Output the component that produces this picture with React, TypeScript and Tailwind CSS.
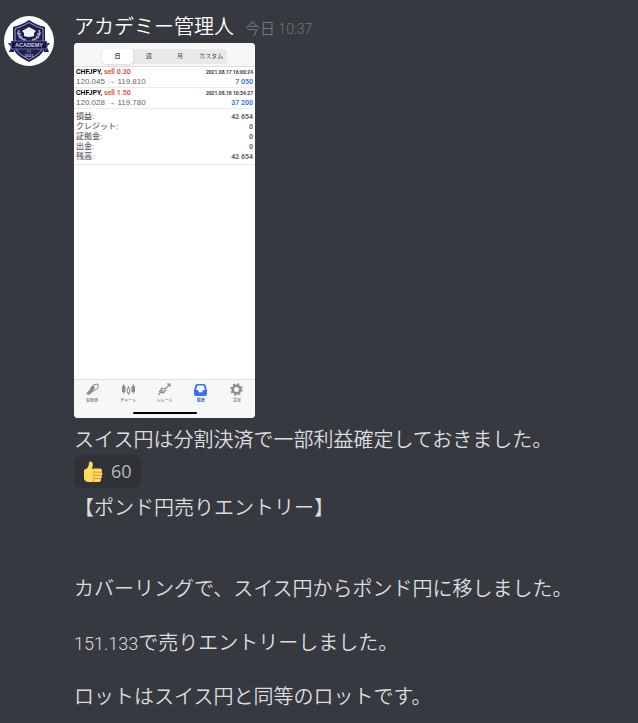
import { ReactNode } from "react";

const latin = "font-['Roboto','Noto_Sans_CJK_JP',sans-serif]";

function Avatar() {
  return (
    <svg viewBox="0 0 50 50" className="h-[50px] w-[50px] shrink-0" role="img" aria-label="ACADEMY FX 2021">
      <circle cx="25" cy="25" r="25" fill="#fff" />
      <path d="M25 4 Q32 9 41 11 V29 C41 38 32 42 25 46 C18 42 9 38 9 29 V11 Q18 9 25 4Z" fill="#1d1f52" />
      <path d="M25 6.500 Q32 11 39 12.600 V29 C39 36 31 40 25 43.500 C19 40 11 36 11 29 V12.600 Q18 11 25 6.500Z" fill="none" stroke="#b9bbd0" strokeWidth="0.800" />
      <path d="M15 14 C13 19 16 23 22 24 M35 14 C37 19 34 23 28 24 M13 17l4 1M15 22l3-2M37 17l-4 1M35 22l-3-2" fill="none" stroke="#a3a6c0" strokeWidth="1.500" />
      <path d="M18 15 L25 11 L32 15 L30 17 V20 Q25 22 20 20 V17Z" fill="#f1f1f6" />
      <path d="M4 27 H10 V36 H5 L7 31Z M46 27 H40 V36 H45 L43 31Z" fill="#1d1f52" />
      <path d="M7 25 H43 V33 H7Z" fill="#14164a" stroke="#9fa2bd" strokeWidth="0.600" />
      <text x="25" y="31" textAnchor="middle" fontSize="5.500" fontWeight="700" fill="#d5d6e2" fontFamily="Liberation Sans, sans-serif">ACADEMY</text>
      <text x="25" y="37" textAnchor="middle" fontSize="3" fill="#b7b9cf" fontFamily="Liberation Sans, sans-serif">FX</text>
      <text x="25" y="41" textAnchor="middle" fontSize="4" fontWeight="700" fill="#b7b9cf" fontFamily="Liberation Sans, sans-serif">2021</text>
    </svg>
  );
}

function Thumb() {
  return (
    <svg viewBox="0 0 20 22" className="h-[22px] w-5" aria-hidden="true">
      <path d="M1 9.500 Q1 8 3 8 C5 7 6 4 6 2 C6 0 9 0 9.500 2 C10 4 9.500 6 9 8 H12 V21 H5 Q1 20 1 17Z" fill="#ffdb5e" />
      <rect x="9" y="7.500" width="10" height="4" rx="2" fill="#ffdb5e" />
      <rect x="10" y="11" width="9.500" height="3.600" rx="1.800" fill="#ffdb5e" />
      <rect x="10" y="14" width="9" height="3.600" rx="1.800" fill="#ffdb5e" />
      <rect x="9" y="17" width="9" height="4" rx="2" fill="#ffdb5e" />
      <path d="M18 11.200H12Q10.500 11 10.500 9.500M19 14.400H12M18 17.500H12M11 11v8q0 2-2 2" fill="none" stroke="#ee9547" strokeWidth="1" />
    </svg>
  );
}

const icons: ReactNode[] = [
  <g key="q"><path d="M0 11 L5 5 L8 8 L3 12Z" fill="currentColor" /><path d="M4 5 L7 2 L9 5 L7 8Z" fill="currentColor" /><path d="M7 2 L12 1 V5 L8 8" fill="none" stroke="currentColor" strokeWidth="1" /></g>,
  <g key="c" fill="currentColor"><path d="M0 3h3.500v6H0zM1.200 1h1v10h-1zM9.500 3H13v6H9.500zM10.800 1h1v10h-1z" /><path d="M5.300 5h2.400v5H5.300zM6.500 3v2M6.500 10v2" stroke="currentColor" strokeWidth="1" fill="none" /></g>,
  <g key="t" fill="none" stroke="currentColor" strokeWidth="1.100"><path d="M0 12 L3 9 L5 10 L8 7 M1 9 L4 5 L7 6 L12 1 M9 1h3v3" /><circle cx="4" cy="8.500" r="1.200" /></g>,
  <path key="h" fillRule="evenodd" d="M3 1H10Q11 1 11.500 2L13 7V11Q13 13 11 13H2Q0 13 0 11V7L1.500 2Q2 1 3 1ZM3.300 2.500L2 7H4Q4.500 9.500 6.500 9.500T9 7H11L9.700 2.500Z" fill="currentColor" />,
  <g key="s" fill="none" stroke="currentColor"><circle cx="6.500" cy="6.500" r="3.700" strokeWidth="2.400" /><circle cx="6.500" cy="6.500" r="5.500" strokeWidth="1.500" strokeDasharray="2.160 2.160" /></g>,
];
const tabs = ["気配値", "チャート", "トレード", "履歴", "設定"];
const trades = [
  { lot: "0.30", from: "120.045", to: "119.810", date: "2021.08.17 16:00:24", profit: "7 050" },
  { lot: "1.50", from: "120.028", to: "119.780", date: "2021.08.18 10:39:27", profit: "37 200" },
];
const totals = [["損益:", "42 654"], ["クレジット:", "0"], ["証拠金:", "0"], ["出金:", "0"], ["残高:", "42 654"]];

function TradeHistory() {
  return (
    <section aria-label="履歴" className="flex h-[375px] w-[181px] flex-col overflow-hidden rounded bg-white font-['Liberation_Sans','Noto_Sans_CJK_JP',sans-serif] font-normal text-[#66666a]">
      <div className="flex justify-center border-b border-[#dedee0] bg-[#f7f7f8] pt-1.5 pb-0.5">
        <div className="grid h-[15px] w-[125px] grid-cols-4 rounded bg-[#e9e9ea] text-[6px] leading-[15px] text-[#444]">
          {["日", "週", "月", "カスタム"].map((label, i) => (
            <button key={label} type="button" className={i === 0 ? "rounded bg-white font-bold shadow-sm" : ""}>{label}</button>
          ))}
        </div>
      </div>
      {trades.map((t) => (
        <div key={t.lot} className="border-b border-[#ebebed] px-[2px] text-[8px] leading-[10px]">
          <div className={`flex justify-between text-[7px] font-semibold ${latin}`}>
            <span className="text-black">CHFJPY, <span className="text-[#e0493e]">sell {t.lot}</span></span>
            <span className="text-[5px] font-bold text-[#38383c]">{t.date}</span>
          </div>
          <div className="flex justify-between">
            <span>{t.from} → {t.to}</span>
            <span className={`text-[7px] font-bold text-[#3f78d8] ${latin}`}>{t.profit}</span>
          </div>
        </div>
      ))}
      <dl className="border-b border-[#ebebed] px-[2px] pt-[3px] pb-0.5 text-[8px] leading-[10px] font-medium">
        {totals.map(([label, value]) => (
          <div key={label} className="flex justify-between">
            <dt>{label}</dt>
            <dd className={`text-[7px] font-bold ${latin}`}>{value}</dd>
          </div>
        ))}
      </dl>
      <nav className="mt-auto border-t border-[#e2e2e4] bg-[#f7f7f8] pb-1">
        <div className="grid grid-cols-5 pt-[3px]">
          {tabs.map((tab, i) => (
            <button key={tab} type="button" className={`flex flex-col items-center text-[4px] leading-[6px] font-bold ${i === 3 ? "text-[#3b6ff0]" : "text-[#8c8c90]"}`}>
              <svg viewBox="0 0 13 13" className="h-[13px] w-[13px]" aria-hidden="true">{icons[i]}</svg>
              <span className="mt-0.5">{tab}</span>
            </button>
          ))}
        </div>
        <div className="mx-auto mt-2 h-0.5 w-16 rounded-full bg-black" />
      </nav>
    </section>
  );
}

export default function App() {
  return (
    <main lang="ja" className="flex min-h-screen gap-5 bg-[#36393f] px-1 pt-3 font-['Noto_Sans_CJK_JP',sans-serif] text-xl leading-[27px] font-[350] text-[#dcddde]">
      <div className="pt-1"><Avatar /></div>
      <article className="min-w-0 flex-1">
        <header className="mb-1 flex h-[27px] items-baseline gap-[11px]">
          <h1 className="text-white">アカデミー管理人</h1>
          <time className="text-[15px] text-[#72767d]">今日 <span className={`text-[14px] leading-none ${latin}`}>10:37</span></time>
        </header>
        <TradeHistory />
        <p className="mt-[7px]">スイス円は分割決済で一部利益確定しておきました。</p>
        <button type="button" aria-label="👍 60" className="mt-[3px] flex h-[33px] items-center gap-2 rounded-lg bg-[#2f3136] px-[9px] font-['Open_Sans',sans-serif] text-[18px] font-normal text-[#b9bbbe]">
          <Thumb />
          <span>60</span>
        </button>
        <div className="mt-[5px] space-y-[27px]">
          <p className="mb-[54px]">【ポンド円売りエントリー】</p>
          <p>カバーリングで、スイス円からポンド円に移しました。</p>
          <p><span className={`text-[18px] leading-none ${latin}`}>151.133</span>で売りエントリーしました。</p>
          <p>ロットはスイス円と同等のロットです。</p>
        </div>
      </article>
    </main>
  );
}
